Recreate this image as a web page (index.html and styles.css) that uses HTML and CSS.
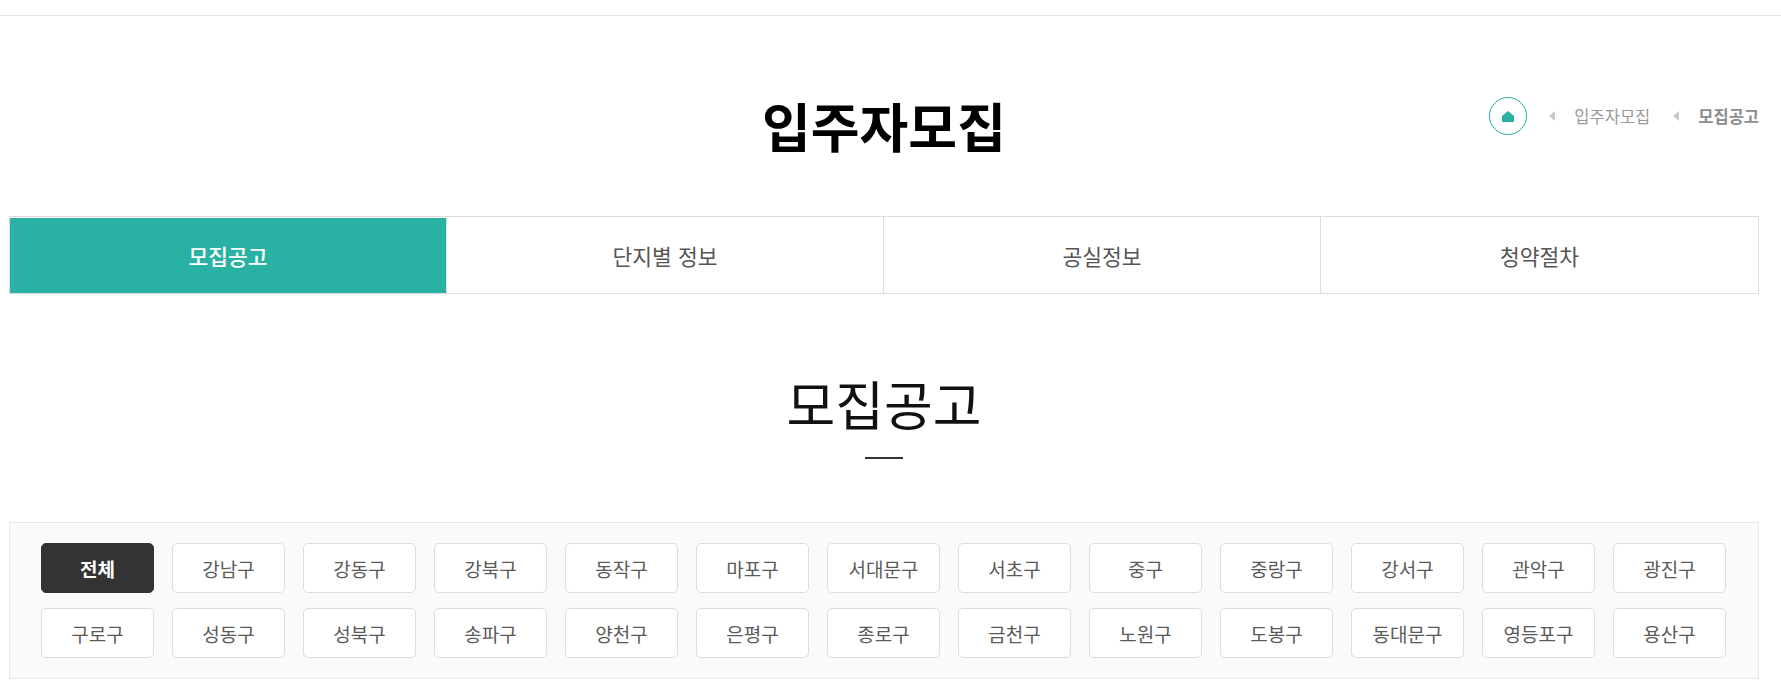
FILE: index.html
```html
<!DOCTYPE html>
<html lang="ko">
<head>
<meta charset="utf-8">
<title>모집공고</title>
<link rel="stylesheet" href="styles.css">
</head>
<body>
<div class="topbar"></div>
<main class="wrap">
  <header class="page-head">
    <h1 class="page-title">입주자모집</h1>
    <nav class="crumbs">
      <span class="home"><svg class="home-icon" viewBox="0 0 12 11"><path d="M6 0 12 5V11H0V5Z"/></svg></span>
      <span class="sep sep-first"></span><span class="crumb">입주자모집</span>
      <span class="sep"></span><span class="crumb current">모집공고</span>
    </nav>
  </header>
  <ul class="tabs">
    <li class="tab active">모집공고</li>
    <li class="tab">단지별 정보</li>
    <li class="tab">공실정보</li>
    <li class="tab">청약절차</li>
  </ul>
  <h2 class="section-title">모집공고</h2>
  <div class="rule"></div>
  <div class="filter">
    <button class="chip on">전체</button><button class="chip">강남구</button><button class="chip">강동구</button><button class="chip">강북구</button><button class="chip">동작구</button><button class="chip">마포구</button><button class="chip">서대문구</button><button class="chip">서초구</button><button class="chip">중구</button><button class="chip">중랑구</button><button class="chip">강서구</button><button class="chip">관악구</button><button class="chip">광진구</button>
    <button class="chip">구로구</button><button class="chip">성동구</button><button class="chip">성북구</button><button class="chip">송파구</button><button class="chip">양천구</button><button class="chip">은평구</button><button class="chip">종로구</button><button class="chip">금천구</button><button class="chip">노원구</button><button class="chip">도봉구</button><button class="chip">동대문구</button><button class="chip">영등포구</button><button class="chip">용산구</button>
  </div>
</main>
</body>
</html>
```

FILE: styles.css
```css
* { box-sizing: border-box; }
html, body { margin: 0; padding: 0; background: #fff; overflow: hidden; }
body { font-family: "Noto Sans CJK KR", "Noto Sans", sans-serif; color: #555; height: 700px; }
.topbar { height: 16px; border-bottom: 1px solid #e2e2e2; }
.wrap { width: 1750px; margin-left: 9px; }
.page-head { display: grid; grid-template-columns: 1fr auto 1fr; align-items: center; height: 200px; padding-top: 17px; }
.page-title { grid-column: 2; margin: 0; font-size: 53px; font-weight: 700; line-height: 60px; color: #000; }
.crumbs { grid-column: 3; justify-self: end; display: flex; align-items: center; font-size: 16.5px; color: #999; padding-bottom: 17px; }
.home { width: 38px; height: 38px; border: 1px solid #29b2a3; border-radius: 50%; display: flex; align-items: center; justify-content: center; }
.home-icon { width: 12px; height: 11px; fill: #29b2a3; }
.sep { width: 0; height: 0; border-style: solid; border-width: 5px 6px 5px 0; border-color: transparent #c8c8c8 transparent transparent; margin: 0 19px 0 23px; }
.sep-first { margin-left: 22px; }
.crumb { line-height: 24px; }
.current { font-weight: 700; color: #8c8c8c; }
.tabs { list-style: none; margin: 0; padding: 0; display: grid; grid-template-columns: repeat(4, 1fr); height: 78px; border: 1px solid #ddd; }
.tab { display: flex; align-items: center; justify-content: center; font-size: 21.5px; color: #555; border-right: 1px solid #ddd; }
.tab:last-child { border-right: 0; }
.tab.active { background: #29b2a3; background-clip: content-box; color: #fff; font-weight: 500; padding: 1px 0 0; }
.section-title { margin: 71px 0 0; font-size: 53px; font-weight: 400; line-height: 76px; text-align: center; color: #111; }
.rule { width: 38px; height: 2px; background: #333; margin: 16px auto 0; }
.filter { margin-top: 63px; height: 157px; background: #fafafa; border: 1px solid #e8e8e8; padding: 20px 31px; display: grid; grid-template-columns: repeat(13, 113px); grid-auto-rows: 50px; gap: 15px 18px; }
.chip { font: inherit; font-size: 19px; color: #5a5a5a; background: #fff; border: 1px solid #ddd; border-radius: 5px; padding: 0; }
.chip.on { background: #333; border-color: #333; color: #fff; font-weight: 700; }
```
